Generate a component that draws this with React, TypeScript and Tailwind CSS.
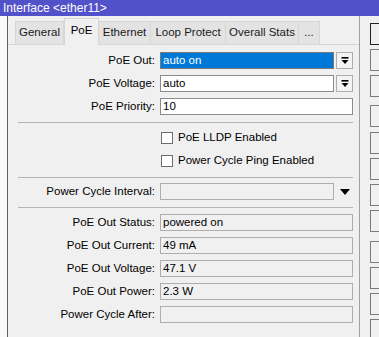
import React from 'react';

const font = "font-['Liberation_Sans',Arial,sans-serif]";

const tabs = [
  { name: 'General', w: 'w-[49px]' },
  { name: 'PoE', w: 'w-[35px]', active: true },
  { name: 'Ethernet', w: 'w-[53px]' },
  { name: 'Loop Protect', w: 'w-[76px]' },
  { name: 'Overall Stats', w: 'w-[74px]' },
  { name: '...', w: 'w-[22px]' },
];

// tops of the button column on the right, cut off by the window edge
const buttonTops = [23, 49, 75, 105, 132, 158, 184, 210, 241, 267, 293, 319];

const DropArrow = () => (
  <svg width="8" height="8" viewBox="0 0 8 8">
    <rect x="0.5" y="0" width="7" height="1.6" fill="#000" />
    <path d="M0.5 3 L7.5 3 L4 7 Z" fill="#000" />
  </svg>
);

const Label: React.FC<{ text: string }> = ({ text }) => (
  <div className="w-[148px] shrink-0 text-right pr-[1px] leading-none">{text}</div>
);

const Separator: React.FC<{ mt: string }> = ({ mt }) => (
  <div className={`${mt} ml-[10px] h-px bg-[#b4b4b4]`} />
);

const ReadField: React.FC<{ label: string; value: string; mt: string }> = ({ label, value, mt }) => (
  <div className={`${mt} flex items-center gap-[4px] h-[17px]`}>
    <Label text={`${label}:`} />
    <div className="flex-1 h-[17px] border border-[#aeaeae] bg-[#f0f0f0] flex items-center px-[2px] leading-none">
      {value}
    </div>
  </div>
);

const Check: React.FC<{ label: string; mt: string }> = ({ label, mt }) => (
  <div className={`${mt} flex items-center h-[17px] pl-[153px] gap-[5px]`}>
    <div className="w-[12px] h-[12px] border border-[#6d6d6d] bg-white" />
    <span className="leading-none">{label}</span>
  </div>
);

export default function App() {
  return (
    <div className={`w-[379px] h-[337px] overflow-hidden bg-[#f0f0f0] text-[11.5px] text-black ${font}`}>
      <div className="h-[16px] bg-[#5151c9] text-white text-[12px] px-[3px] flex items-center leading-none">
        Interface &lt;ether11&gt;
      </div>

      <div className="flex h-[321px]">
        <div className="w-[8px] shrink-0 bg-[#fafafa] border-r border-[#5e5e5e]" />

        <div className="w-[352px] shrink-0 flex flex-col border-r border-[#a0a0a0]">
          <div className="h-[29px] flex items-end pl-[7px] border-b border-[#d6d6d6]">
            {tabs.map((t) =>
              t.active ? (
                <div
                  key={t.name}
                  className={`${t.w} h-[27px] -mb-px bg-[#f0f0f0] border border-b-0 border-[#d6d6d6] flex items-start justify-center pt-[6px] leading-none relative`}
                >
                  {t.name}
                </div>
              ) : (
                <div
                  key={t.name}
                  className={`${t.w} h-[23px] bg-[#e3e3e3] border border-b-0 border-[#d6d6d6] -ml-px first:ml-0 flex items-center justify-center leading-none text-[#1a1a1a]`}
                >
                  {t.name}
                </div>
              )
            )}
          </div>

          <div className="flex-1 pt-[7px] pr-[6px]">
            <div className="flex items-center gap-[4px] h-[17px]">
              <Label text="PoE Out:" />
              <div className="flex-1 h-[17px] border border-[#7a7a7a] bg-[#0078d7] text-white flex items-center px-[2px] leading-none">
                auto on
              </div>
              <div className="w-[17px] h-[17px] ml-[-2px] border border-[#adadad] bg-[#f3f3f3] flex items-center justify-center">
                <DropArrow />
              </div>
            </div>

            <div className="mt-[6px] flex items-center gap-[4px] h-[17px]">
              <Label text="PoE Voltage:" />
              <div className="flex-1 h-[17px] border border-[#8c8c8c] bg-white flex items-center px-[2px] leading-none">
                auto
              </div>
              <div className="w-[17px] h-[17px] ml-[-2px] border border-[#adadad] bg-[#f3f3f3] flex items-center justify-center">
                <DropArrow />
              </div>
            </div>

            <div className="mt-[6px] flex items-center gap-[4px] h-[17px]">
              <Label text="PoE Priority:" />
              <div className="flex-1 h-[17px] border border-[#8c8c8c] bg-white flex items-center px-[2px] leading-none">
                10
              </div>
            </div>

            <Separator mt="mt-[7px]" />

            <Check mt="mt-[6px]" label="PoE LLDP Enabled" />
            <Check mt="mt-[6px]" label="Power Cycle Ping Enabled" />

            <Separator mt="mt-[8px]" />

            <div className="mt-[5px] flex items-center gap-[4px] h-[17px]">
              <Label text="Power Cycle Interval:" />
              <div className="flex-1 h-[17px] border border-[#aeaeae] bg-[#f0f0f0]" />
              <div className="w-[17px] h-[17px] ml-[-2px] flex items-center justify-center">
                <svg width="10" height="6" viewBox="0 0 10 6">
                  <path d="M0 0 L10 0 L5 6 Z" fill="#000" />
                </svg>
              </div>
            </div>

            <Separator mt="mt-[7px]" />

            <ReadField mt="mt-[6px]" label="PoE Out Status" value="powered on" />
            <ReadField mt="mt-[6px]" label="PoE Out Current" value="49 mA" />
            <ReadField mt="mt-[6px]" label="PoE Out Voltage" value="47.1 V" />
            <ReadField mt="mt-[6px]" label="PoE Out Power" value="2.3 W" />
            <ReadField mt="mt-[6px]" label="Power Cycle After" value="" />
          </div>
        </div>

        <div className="ml-[10px] w-[70px] shrink-0 flex flex-col">
          {buttonTops.map((top, i) => (
            <div
              key={top}
              style={{ marginTop: i === 0 ? top - 16 : top - buttonTops[i - 1] - 22 }}
              className={`h-[22px] shrink-0 bg-[#f0f0f0] border ${i === 0 ? 'border-[#222]' : 'border-[#7a7a7a]'}`}
            />
          ))}
        </div>
      </div>
    </div>
  );
}
